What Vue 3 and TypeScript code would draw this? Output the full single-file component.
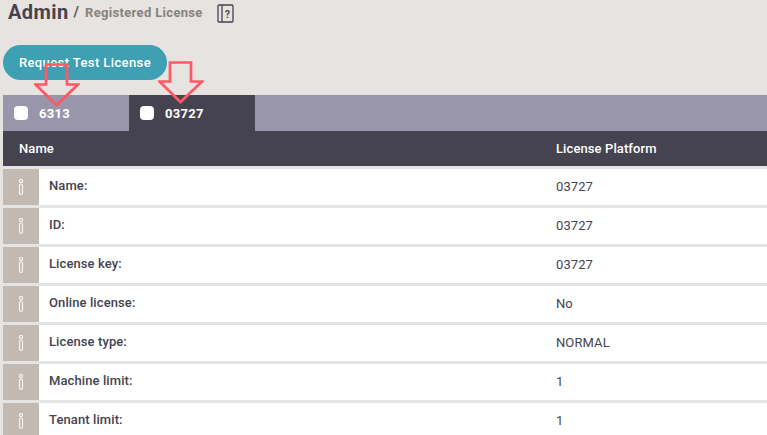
<script setup lang="ts">
const tabs = [
  { label: '6313', active: false },
  { label: '03727', active: true },
];

const rows = [
  { name: 'Name:', value: '03727' },
  { name: 'ID:', value: '03727' },
  { name: 'License key:', value: '03727' },
  { name: 'Online license:', value: 'No' },
  { name: 'License type:', value: 'NORMAL' },
  { name: 'Machine limit:', value: '1' },
  { name: 'Tenant limit:', value: '1' },
];
</script>

<template>
  <div class="page">
    <header class="title">
      <h1>Admin</h1>
      <span class="slash">/</span>
      <span class="crumb">Registered License</span>
      <svg class="help" width="17" height="19" viewBox="0 0 17 19" fill="none">
        <rect x="1" y="1" width="15" height="17" rx="1" stroke="#45434f" stroke-width="1.3" />
        <path d="M5 1v17" stroke="#45434f" stroke-width="1.3" />
        <text x="10.5" y="13.5" text-anchor="middle" class="help-mark">?</text>
      </svg>
    </header>

    <button class="request" type="button">Request Test License</button>

    <div class="tabs">
      <div v-for="tab in tabs" :key="tab.label" class="tab" :class="{ active: tab.active }">
        <span class="check"></span>
        <span>{{ tab.label }}</span>
      </div>
    </div>

    <div class="head">
      <span class="col-name">Name</span>
      <span class="col-value">License Platform</span>
    </div>

    <div class="rows">
      <div v-for="row in rows" :key="row.name" class="row">
        <div class="info">
          <svg width="6" height="16" viewBox="0 0 6 16" fill="none">
            <circle cx="3" cy="2" r="1.6" stroke="#f6f3f0" stroke-width="1.2" />
            <rect x="1.5" y="5" width="3" height="10.400" rx="1.5" stroke="#f6f3f0" stroke-width="1.2" />
          </svg>
        </div>
        <span class="row-name">{{ row.name }}</span>
        <span class="row-value">{{ row.value }}</span>
      </div>
    </div>

    <svg class="arrow arrow-one" width="46" height="44" viewBox="0 0 46 44" fill="none">
      <path d="M12 1.5h21v20h11L22.500 42 1.500 21.500H12z" stroke="#ff5a64" stroke-width="2.700" />
    </svg>
    <svg class="arrow arrow-two" width="46" height="44" viewBox="0 0 46 44" fill="none">
      <path d="M12 1.500h21v19h11L22.500 41 1.500 20.500H12z" stroke="#ff5a64" stroke-width="2.700" />
    </svg>
  </div>
</template>

<style scoped>
.page {
  position: relative;
  width: 767px;
  height: 435px;
  overflow: hidden;
  padding-left: 3px;
  box-sizing: border-box;
  background: #e7e3e0;
  font-family: Roboto, "Liberation Sans", sans-serif;
  color: #45434f;
}
.title {
  display: flex;
  align-items: center;
  height: 24px;
  padding-left: 5px;
}
h1 {
  margin: 0;
  font-size: 20px;
  font-weight: 700;
  letter-spacing: 0.4px;
  color: #45434f;
}
.slash {
  margin-left: 5px;
  font-size: 14px;
  font-weight: 500;
}
.crumb {
  margin-left: 6px;
  font-size: 13px;
  font-weight: 700;
  letter-spacing: 0.33px;
  color: #86827f;
}
.help {
  margin: 2px 0 0 14px;
}
.help-mark {
  font-family: Roboto, sans-serif;
  font-size: 10px;
  font-weight: 700;
  fill: #45434f;
}
.request {
  display: block;
  width: 164px;
  height: 35px;
  margin-top: 21px;
  padding: 0;
  border: 0;
  border-radius: 18px;
  background: #3fa0b4;
  color: #fff;
  font-family: inherit;
  font-size: 13px;
  font-weight: 500;
  letter-spacing: 0.4px;
}
.tabs {
  display: flex;
  height: 36px;
  margin-top: 15px;
  background: #9996ab;
}
.tab {
  display: flex;
  align-items: center;
  gap: 11px;
  width: 126px;
  box-sizing: border-box;
  padding-left: 11px;
  color: #fff;
  font-size: 13px;
  font-weight: 700;
  letter-spacing: 0.3px;
}
.tab.active {
  background: #45434f;
}
.check {
  width: 14px;
  height: 14px;
  border-radius: 4px;
  background: #fff;
}
.head {
  display: flex;
  align-items: center;
  height: 35px;
  background: #45434f;
  color: #fff;
  font-size: 13px;
  font-weight: 500;
  letter-spacing: 0.1px;
}
.col-name {
  width: 553px;
  padding-left: 16px;
  box-sizing: border-box;
}
.rows {
  display: flex;
  flex-direction: column;
  gap: 3px;
  margin-top: 3px;
}
.row {
  display: flex;
  align-items: center;
  flex: none;
  height: 36px;
  background: #fff;
  font-size: 13px;
}
.info {
  display: flex;
  align-items: center;
  justify-content: center;
  flex: none;
  width: 36px;
  height: 100%;
  background: #c1b9b2;
}
.row-name {
  width: 517px;
  box-sizing: border-box;
  padding: 0 0 3px 10px;
  font-weight: 500;
  letter-spacing: 0.1px;
}
.row-value {
  padding-bottom: 2px;
  letter-spacing: 0.1px;
}
.arrow {
  position: absolute;
}
.arrow-one {
  left: 34px;
  top: 63px;
}
.arrow-two {
  left: 158px;
  top: 61px;
}
</style>
